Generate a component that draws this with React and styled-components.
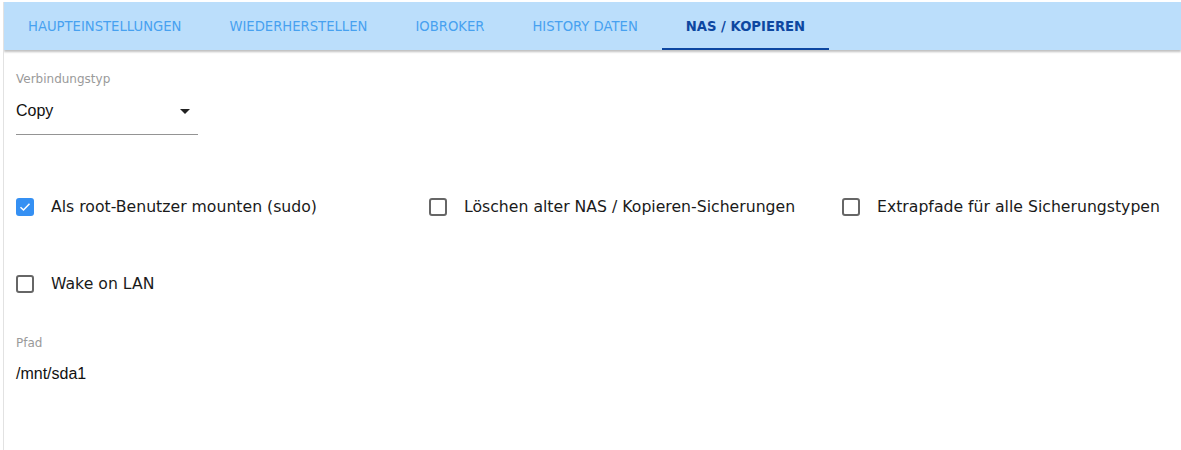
import React from "react";
import styled, { createGlobalStyle } from "styled-components";

const Global = createGlobalStyle`
  html, body { margin: 0; padding: 0; background: #fff; }
  body { font-family: "DejaVu Sans", "Liberation Sans", sans-serif; overflow: hidden; }
`;

const Page = styled.div`
  padding-left: 3px;
  padding-top: 2px;
  height: 450px;
  box-sizing: border-box;
`;

const Frame = styled.div`
  border-left: 1px solid #e2e2e2;
  height: 100%;
  overflow: hidden;
`;

const AppBar = styled.div`
  display: flex;
  height: 48px;
  background: #bbdefb;
  box-shadow: 0 2px 2px rgba(0, 0, 0, 0.25);
  position: relative;
  z-index: 1;
`;

const Tab = styled.div`
  position: relative;
  display: flex;
  align-items: center;
  padding: 0 24px;
  font-size: 13.2px;
  text-transform: uppercase;
  white-space: nowrap;
  color: ${(p) => (p.$active ? "#0d47a1" : "#47a1f0")};
  font-weight: ${(p) => (p.$active ? 700 : 400)};
`;

const Indicator = styled.span`
  position: absolute;
  left: 0;
  right: 0;
  bottom: 0;
  height: 2px;
  background: #0d47a1;
`;

const Content = styled.div`
  padding: 22px 12px 0;
  display: flex;
  flex-direction: column;
`;

const Field = styled.div`
  display: flex;
  flex-direction: column;
  width: ${(p) => p.$width || "auto"};
  margin-top: ${(p) => p.$mt || 0}px;
`;

const Label = styled.label`
  font-size: 12px;
  color: #9a9a9a;
  line-height: 14px;
`;

const SelectBox = styled.div`
  display: flex;
  align-items: center;
  justify-content: space-between;
  margin-top: 10px;
  height: 30px;
  border-bottom: 1px solid #949494;
  padding-bottom: 8px;
  font-family: "Liberation Sans", Arial, sans-serif;
  font-size: 16px;
  color: #111;
`;

const Arrow = styled.span`
  width: 0;
  height: 0;
  margin-right: 8px;
  border-left: 5px solid transparent;
  border-right: 5px solid transparent;
  border-top: 5px solid #222;
`;

const ValueText = styled.div`
  margin-top: 15px;
  font-family: "Liberation Sans", Arial, sans-serif;
  font-size: 16px;
  color: #111;
`;

const CheckRow = styled.div`
  display: grid;
  grid-template-columns: repeat(3, 413px);
  margin-top: ${(p) => p.$mt}px;
`;

const CheckItem = styled.label`
  display: flex;
  align-items: center;
  gap: 17px;
  font-size: 15.7px;
  color: #1a1a1a;
  white-space: nowrap;
`;

const Box = styled.span`
  width: 18px;
  height: 18px;
  box-sizing: border-box;
  border-radius: 3px;
  display: flex;
  align-items: center;
  justify-content: center;
  flex: none;
  background: ${(p) => (p.$checked ? "#3590f3" : "#fff")};
  border: ${(p) => (p.$checked ? "none" : "2px solid #666")};
`;

function Checkbox({ checked, label }) {
  return (
    <CheckItem>
      <Box $checked={checked}>
        {checked && (
          <svg width="12" height="10" viewBox="0 0 12 10">
            <polyline points="1.5,5.2 4.5,8 10.5,1.8" fill="none" stroke="#fff" strokeWidth="1.5" />
          </svg>
        )}
      </Box>
      {label}
    </CheckItem>
  );
}

const tabs = ["Haupteinstellungen", "Wiederherstellen", "ioBroker", "History Daten", "NAS / Kopieren"];

export default function App() {
  return (
    <>
      <Global />
      <Page>
        <Frame>
          <AppBar>
            {tabs.map((t, i) => (
              <Tab key={t} $active={i === 4}>
                {t}
                {i === 4 && <Indicator />}
              </Tab>
            ))}
          </AppBar>
          <Content>
            <Field $width="182px">
              <Label>Verbindungstyp</Label>
              <SelectBox>
                <span>Copy</span>
                <Arrow />
              </SelectBox>
            </Field>
            <CheckRow $mt={62}>
              <Checkbox checked label="Als root-Benutzer mounten (sudo)" />
              <Checkbox label="Löschen alter NAS / Kopieren-Sicherungen" />
              <Checkbox label="Extrapfade für alle Sicherungstypen" />
            </CheckRow>
            <CheckRow $mt={58}>
              <Checkbox label="Wake on LAN" />
            </CheckRow>
            <Field $mt={43}>
              <Label>Pfad</Label>
              <ValueText>/mnt/sda1</ValueText>
            </Field>
          </Content>
        </Frame>
      </Page>
    </>
  );
}
